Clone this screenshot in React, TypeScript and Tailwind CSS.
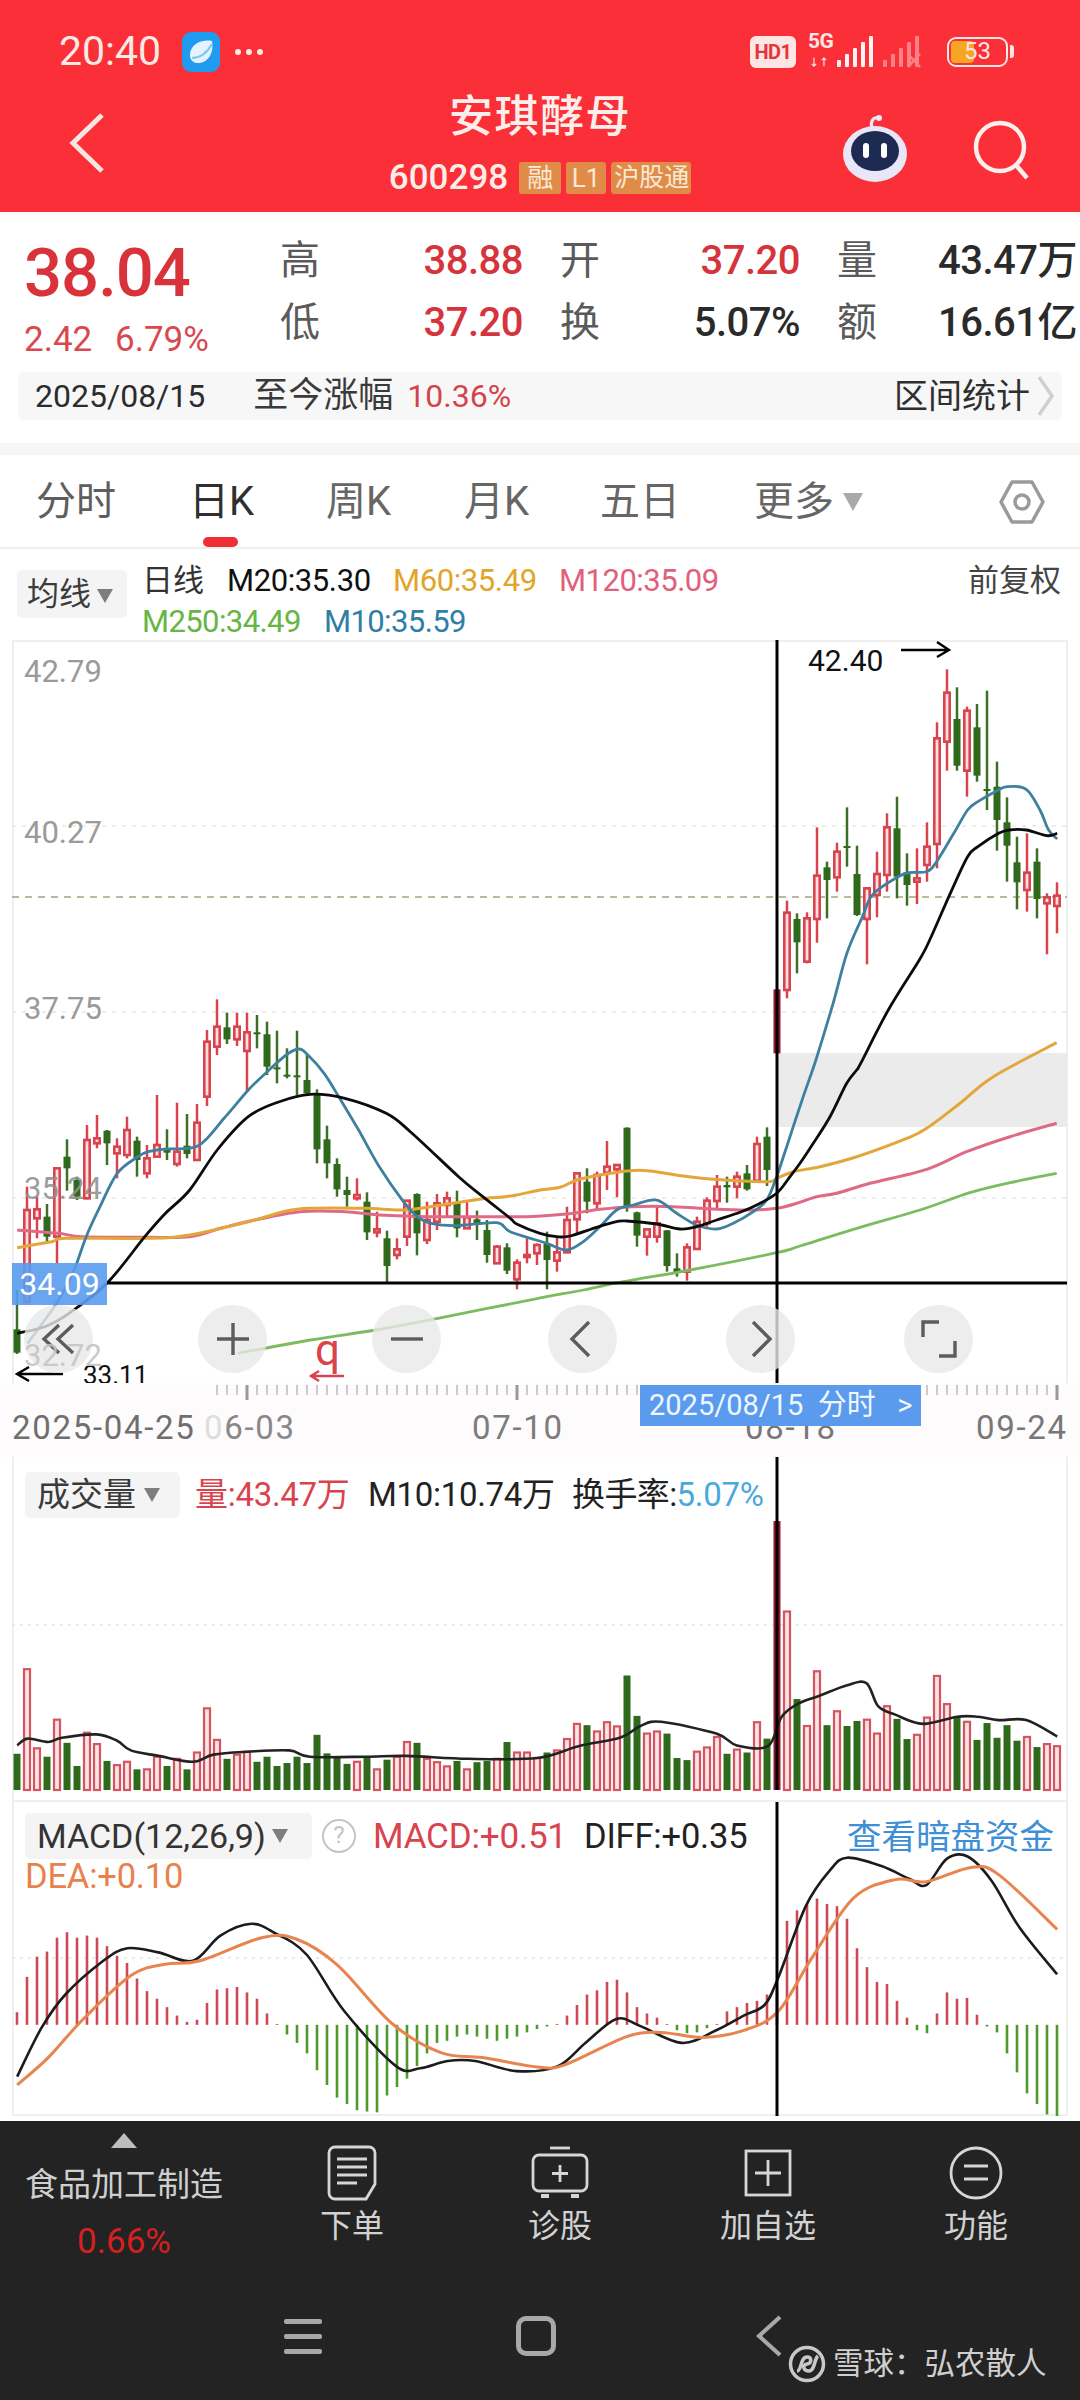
import React from "react";

type P = [number, number];
const zA = (p: P[]): P[] => p.map(([x, y]) => [x / 2.9, 980 + y / 3]);
const z7 = (p: P[]): P[] => p.map(([x, y]) => [500 + x / 3, 1090 + y / 3]);
const z9 = (p: P[]): P[] => p.map(([x, y]) => [760 + x / 3, 1040 + y / 3]);
const z4 = (p: P[]): P[] => p.map(([x, y]) => [540 + x / 2.9, 620 + y / 3]);
const z5 = (p: P[]): P[] => p.map(([x, y]) => [x / 1.452, 1460 + y / 2.376]);

function smooth(pts: P[]): string {
  let d = `M${pts[0][0].toFixed(1)} ${pts[0][1].toFixed(1)}`;
  for (let i = 0; i < pts.length - 1; i++) {
    const a = pts[Math.max(0, i - 1)];
    const b = pts[i];
    const c = pts[i + 1];
    const e = pts[Math.min(pts.length - 1, i + 2)];
    const c1x = b[0] + (c[0] - a[0]) / 6;
    const c1y = b[1] + (c[1] - a[1]) / 6;
    const c2x = c[0] - (e[0] - b[0]) / 6;
    const c2y = c[1] - (e[1] - b[1]) / 6;
    d += `C${c1x.toFixed(1)} ${c1y.toFixed(1)} ${c2x.toFixed(1)} ${c2y.toFixed(1)} ${c[0].toFixed(1)} ${c[1].toFixed(1)}`;
  }
  return d;
}

type C = [number, number, number, number, string];
const groupA: C[] = [
  [930, 1048, 1118, 1122, "g"], [620, 690, 965, 975, "r"], [650, 688, 715, 775, "r"], [672, 710, 770, 785, "g"], [563, 565, 770, 850, "r"],
  [478, 530, 565, 632, "g"], [590, 600, 650, 660, "g"], [435, 480, 655, 658, "r"], [405, 475, 490, 505, "r"], [450, 452, 490, 555, "g"],
  [475, 500, 520, 595, "r"], [410, 450, 525, 535, "r"], [470, 482, 540, 590, "g"], [495, 535, 580, 595, "r"], [345, 495, 530, 532, "r"],
  [448, 505, 518, 540, "g"], [368, 515, 552, 560, "r"], [402, 497, 522, 535, "g"], [372, 428, 540, 542, "r"], [150, 185, 350, 378, "r"],
  [58, 140, 200, 225, "r"], [98, 142, 178, 192, "g"], [98, 140, 178, 198, "r"], [98, 157, 213, 335, "r"], [105, 157, 162, 205, "g"],
  [125, 163, 260, 285, "g"], [152, 262, 267, 310, "g"], [205, 284, 290, 295, "g"], [152, 286, 290, 345, "g"], [225, 300, 340, 342, "g"],
  [328, 342, 508, 550, "g"], [437, 478, 550, 595, "g"], [535, 552, 628, 650, "g"], [590, 630, 645, 680, "g"], [595, 645, 655, 662, "r"],
  [637, 665, 757, 780, "g"], [695, 748, 757, 772, "r"], [752, 775, 858, 910, "g"], [775, 808, 825, 838, "r"], [660, 662, 770, 798, "r"],
  [640, 642, 760, 826, "g"], [665, 720, 780, 792, "r"], [642, 670, 725, 750, "r"], [635, 655, 675, 710, "r"], [632, 668, 745, 772, "g"],
  [665, 712, 745, 747, "r"], [692, 718, 735, 780, "g"], [720, 750, 825, 848, "g"], [795, 800, 850, 852, "r"], [790, 802, 872, 882, "g"],
  [838, 848, 898, 928, "r"], [770, 825, 830, 850, "r"], [790, 795, 820, 855, "r"],
];
const groupB: C[] = [
  [425, 462, 510, 598, "g"], [440, 487, 512, 545, "r"], [350, 390, 487, 490, "r"], [248, 250, 388, 430, "r"], [235, 275, 335, 370, "g"],
  [245, 255, 340, 360, "r"], [153, 230, 248, 300, "r"], [222, 225, 238, 322, "r"], [112, 113, 350, 365, "g"], [365, 367, 437, 470, "g"],
  [415, 418, 440, 497, "r"], [350, 400, 440, 458, "r"], [420, 421, 528, 545, "g"], [490, 535, 547, 560, "g"], [460, 472, 545, 572, "r"],
  [380, 395, 477, 480, "r"], [322, 332, 400, 410, "r"], [255, 290, 333, 355, "r"], [260, 285, 292, 338, "g"], [245, 260, 290, 325, "r"],
  [225, 250, 298, 302, "g"], [140, 162, 272, 274, "r"], [112, 140, 240, 288, "g"],
];
const groupC: C[] = [
  [1108, 1108, 1300, 1300, "d"], [842, 878, 1110, 1135, "r"], [880, 897, 967, 1060, "g"], [877, 895, 1025, 1030, "r"], [622, 767, 897, 968, "r"],
  [725, 742, 780, 895, "g"], [668, 695, 772, 815, "r"], [562, 678, 684, 740, "g"], [677, 762, 885, 888, "g"], [802, 805, 897, 1033, "r"],
  [695, 762, 825, 892, "r"], [580, 622, 765, 815, "r"], [530, 625, 770, 835, "g"], [700, 757, 795, 857, "g"], [685, 775, 785, 852, "r"],
  [607, 680, 735, 785, "r"], [307, 355, 672, 745, "r"], [148, 218, 365, 452, "r"], [202, 297, 437, 452, "g"], [260, 272, 452, 530, "r"],
  [252, 322, 467, 485, "g"], [212, 507, 513, 570, "g"], [425, 500, 600, 692, "g"], [532, 607, 677, 785, "g"], [650, 727, 787, 868, "g"],
  [640, 758, 810, 875, "r"], [685, 725, 837, 895, "g"], [820, 832, 850, 1003, "r"], [787, 827, 858, 940, "r"],
];
const candles = [
  ...groupA.map((c) => [980 + c[0] / 3, 980 + c[1] / 3, 980 + c[2] / 3, 980 + c[3] / 3, c[4]] as const),
  ...groupB.map((c) => [1090 + c[0] / 3, 1090 + c[1] / 3, 1090 + c[2] / 3, 1090 + c[3] / 3, c[4]] as const),
  ...groupC.map((c) => [620 + c[0] / 3, 620 + c[1] / 3, 620 + c[2] / 3, 620 + c[3] / 3, c[4]] as const),
];

const blue: P[] = [
  ...zA([[80, 1090], [130, 1020], [170, 960], [215, 870], [250, 770], [290, 680], [340, 580], [400, 530], [430, 515], [480, 507], [575, 497], [650, 415], [720, 330], [775, 275], [830, 225], [865, 207], [890, 222], [940, 280], [985, 355], [1040, 450], [1100, 560], [1170, 665], [1210, 710], [1250, 730], [1320, 737], [1440, 728], [1480, 755]]),
  ...z7([[140, 460], [200, 480], [250, 455], [300, 410], [350, 360], [400, 345], [470, 330], [530, 370], [590, 405], [650, 417], [700, 400], [760, 365], [800, 330], [830, 260], [860, 170]]),
  ...z4([[760, 1440], [800, 1320], [850, 1150], [890, 1000], [935, 890], [960, 830], [1000, 795], [1060, 760], [1120, 755], [1150, 725], [1200, 640], [1240, 570], [1270, 545], [1320, 515], [1355, 500], [1410, 508], [1450, 570], [1475, 630], [1500, 657]]),
];
const black: P[] = [
  ...zA([[50, 1060], [130, 1040], [200, 1000], [310, 910], [420, 770], [480, 700], [550, 630], [630, 510], [720, 410], [810, 365], [900, 343], [1000, 355], [1120, 400], [1190, 455], [1330, 590], [1400, 650], [1480, 715]]),
  ...z7([[50, 402], [120, 430], [170, 440], [210, 438], [290, 412], [350, 395], [380, 393], [470, 402], [540, 417], [590, 410], [650, 390], [720, 367], [770, 345], [830, 310], [870, 260], [900, 220]]),
  ...z9([[160, 310], [210, 230], [260, 130], [290, 90]]),
  ...z4([[930, 1330], [1010, 1170], [1100, 1020], [1130, 960], [1190, 820], [1240, 710], [1270, 680], [1330, 640], [1360, 630], [1410, 630], [1470, 647], [1500, 640]]),
];
const yellow: P[] = [
  ...zA([[50, 803], [150, 785], [190, 775], [430, 775], [550, 765], [720, 725], [830, 693], [900, 685], [1060, 685], [1170, 690], [1280, 675], [1410, 655]]),
  ...z7([[0, 322], [50, 315], [120, 300], [180, 292], [230, 270], [300, 255], [390, 242], [450, 243], [550, 258], [640, 268], [800, 275]]),
  ...z9([[50, 415], [100, 395], [180, 380], [290, 350], [440, 295], [500, 265], [600, 190], [700, 110], [890, 8]]),
];
const pink: P[] = [
  ...zA([[50, 750], [170, 760], [240, 770], [430, 772], [550, 770], [640, 745], [730, 722], [870, 695], [1000, 695], [1100, 705], [1250, 710]]),
  ...z7([[0, 380], [80, 380], [200, 372], [300, 358], [400, 350], [520, 350], [650, 358], [760, 360]]),
  ...z9([[50, 505], [110, 490], [170, 470], [230, 460], [330, 430], [500, 388], [620, 335], [750, 290], [890, 250]]),
];
const green: P[] = [
  ...zA([[690, 1120], [900, 1080], [1090, 1050], [1270, 1015]]),
  ...z7([[100, 628], [250, 600], [370, 575], [570, 540], [830, 488]]),
  ...z9([[120, 618], [290, 565], [480, 510], [630, 458], [750, 428], [890, 400]]),
];

const volRaw = "g698 r497 r685 g705 r617 g672 g727 r648 r675 g715 r725 r717 g735 r735 r705 g727 r710 g735 r695 r590 r665 g710 r700 r693 g717 g705 g727 g720 g705 g720 g653 g697 g708 g722 r717 g708 r735 g712 r705 r670 g672 r710 r718 r728 g715 r735 g718 g715 r710 g670 r695 r695 r708 g695 r690 r663 r627 g630 r645 r623 r633 g512 g608 r650 r645 g650 g708 g713 r693 r683 r658 g698 r688 g695 r623 g662 d145 r360 g568 r632 r502 g630 r597 g632 g620 r617 r650 r585 g615 g663 r653 r612 r513 r580 g608 r622 g665 g625 g660 g630 g667 r658 g682 r675 r680"
  .split(" ")
  .map((s) => ({ c: s[0], y: 1460 + Number(s.slice(1)) / 2.376 }));

const volLine = z5([[25, 678], [40, 662], [70, 670], [90, 660], [140, 652], [170, 667], [190, 690], [230, 703], [280, 717], [310, 700], [360, 693], [420, 690], [450, 705], [530, 705], [590, 703], [680, 710], [780, 708], [840, 680], [900, 660], [930, 632], [960, 622], [1040, 650], [1070, 678], [1115, 680], [1135, 610], [1160, 578], [1190, 560], [1230, 535], [1258, 530], [1275, 585], [1300, 605], [1340, 627], [1390, 610], [1420, 610], [1450, 618], [1490, 618], [1535, 657]]);

const macdTops = [1312, 1228, 1180, 1168, 1135, 1122, 1135, 1130, 1135, 1155, 1178, 1195, 1232, 1262, 1280, 1300, 1320, 1335, 1330, 1290, 1258, 1255, 1252, 1265, 1280, 1315, 1340, 1365, 1385, 1410, 1450, 1485, 1515, 1530, 1545, 1548, 1550, 1510, 1490, 1470, 1440, 1410, 1385, 1380, 1370, 1365, 1370, 1375, 1380, 1375, 1370, 1360, 1352, 1346, 1340, 1320, 1295, 1270, 1260, 1240, 1235, 1265, 1300, 1315, 1325, 1340, 1355, 1362, 1360, 1350, 1340, 1310, 1300, 1290, 1285, 1270, 1260, 1095, 1070, 1055, 1042, 1055, 1060, 1090, 1160, 1205, 1240, 1245, 1285, 1325, 1355, 1362, 1315, 1265, 1280, 1278, 1318, 1346, 1360, 1410, 1455, 1505, 1530, 1555, 1560];

const diff = z5([[25, 1465], [60, 1350], [95, 1270], [150, 1190], [185, 1160], [230, 1170], [280, 1190], [320, 1130], [365, 1102], [400, 1125], [445, 1175], [500, 1310], [575, 1440], [610, 1445], [650, 1428], [690, 1428], [750, 1452], [810, 1440], [850, 1385], [895, 1328], [930, 1345], [990, 1385], [1040, 1355], [1080, 1320], [1110, 1295], [1130, 1230], [1170, 1060], [1205, 975], [1230, 945], [1280, 965], [1320, 995], [1345, 1010], [1375, 947], [1405, 942], [1440, 1000], [1480, 1110], [1535, 1222]]);
const dea = z5([[25, 1485], [70, 1420], [120, 1330], [190, 1225], [240, 1198], [290, 1190], [380, 1135], [430, 1138], [490, 1200], [570, 1340], [640, 1408], [700, 1420], [780, 1442], [820, 1437], [910, 1370], [960, 1360], [1020, 1372], [1080, 1355], [1130, 1310], [1180, 1180], [1240, 1040], [1300, 997], [1345, 1002], [1410, 968], [1450, 985], [1535, 1115]]);

const cx = (i: number) => 17 + i * 10;

function PriceChart() {
  return (
    <svg className="absolute inset-0" width={1055} height={743} viewBox="12 640 1055 743">
      <rect x={777} y={1053} width={290} height={74} fill="#ecebec" />
      {[826, 1012, 1198].map((y) => (
        <line key={y} x1={12} x2={1067} y1={y} y2={y} stroke="#e8e8e8" strokeWidth={1.5} strokeDasharray="4 6" />
      ))}
      <line x1={12} x2={1067} y1={897} y2={897} stroke="#a8a17f" strokeWidth={1.5} strokeDasharray="7 6" />
      {candles.map((c, i) => {
        const x = cx(i);
        if (c[4] === "g")
          return (
            <g key={i}>
              <line x1={x} x2={x} y1={c[0]} y2={c[3]} stroke="#3d6f24" strokeWidth={2.5} />
              <rect x={x - 3.5} y={c[1]} width={7} height={Math.max(2, c[2] - c[1])} fill="#2f6a1c" />
            </g>
          );
        if (c[4] === "d") return <rect key={i} x={x - 3.5} y={c[1]} width={7} height={c[2] - c[1]} fill="#8f1b2c" />;
        return (
          <g key={i}>
            <line x1={x} x2={x} y1={c[0]} y2={c[3]} stroke="#d9434e" strokeWidth={2.5} />
            <rect x={x - 2.7} y={c[1]} width={5.4} height={Math.max(2, c[2] - c[1])} fill="#f8dede" stroke="#d9434e" strokeWidth={2.6} />
          </g>
        );
      })}
      <path d={smooth(green)} fill="none" stroke="#7dbb5f" strokeWidth={2.8} />
      <path d={smooth(pink)} fill="none" stroke="#df6a85" strokeWidth={3} />
      <path d={smooth(yellow)} fill="none" stroke="#e2a63a" strokeWidth={3} />
      <path d={smooth(blue)} fill="none" stroke="#3f7f9f" strokeWidth={2.8} />
      <path d={smooth(black)} fill="none" stroke="#0c0c0c" strokeWidth={2.8} />
      <line x1={107} x2={1067} y1={1283} y2={1283} stroke="#000" strokeWidth={3} />
      <line x1={777} x2={777} y1={640} y2={1383} stroke="#000" strokeWidth={3} />
      <path d="M901 650H948M937 642L949 650L937 657" fill="none" stroke="#000" strokeWidth={2.4} />
      <path d="M63 1374H17M29 1367L17 1374L29 1381" fill="none" stroke="#000" strokeWidth={2.4} />
      <path d="M311 1376H344M319 1371L311 1376L319 1381" fill="none" stroke="#d9434e" strokeWidth={2.4} />
    </svg>
  );
}

function CircleBtn({ left, children }: { left: string; children: React.ReactNode }) {
  return (
    <div className={`absolute top-[665px] w-[69px] h-[68px] rounded-full bg-[#e8e8e8]/80 flex items-center justify-center ${left}`}>
      <svg width={44} height={44} viewBox="0 0 44 44" fill="none" stroke="#5c5c5c" strokeWidth={3.4}>
        {children}
      </svg>
    </div>
  );
}

function VolumeChart() {
  return (
    <svg className="absolute inset-0" width={1055} height={345} viewBox="12 1457 1055 345">
      <line x1={12} x2={1067} y1={1625} y2={1625} stroke="#e4e4e4" strokeWidth={1.5} strokeDasharray="3 5" />
      {volRaw.map((b, i) => {
        const x = cx(i);
        if (b.c === "r")
          return <rect key={i} x={x - 3} y={b.y} width={6} height={1790 - b.y} fill="#f7e4e4" stroke="#d6545f" strokeWidth={2.2} />;
        return <rect key={i} x={x - 3.5} y={b.y} width={7} height={1790 - b.y} fill={b.c === "g" ? "#2f6a1c" : "#8f1b2c"} />;
      })}
      <path d={smooth(volLine)} fill="none" stroke="#222" strokeWidth={2.6} />
      <line x1={777} x2={777} y1={1457} y2={1790} stroke="#000" strokeWidth={3} />
    </svg>
  );
}

function MacdChart() {
  const zero = 1460 + 1342 / 2.376;
  return (
    <svg className="absolute inset-0" width={1055} height={314} viewBox="12 1802 1055 314">
      <line x1={12} x2={1067} y1={1958} y2={1958} stroke="#e4e4e4" strokeWidth={1.5} strokeDasharray="3 5" />
      {macdTops.map((t, i) => {
        const y = 1460 + t / 2.376;
        const x = cx(i);
        return <line key={i} x1={x} x2={x} y1={y} y2={zero} stroke={t < 1342 ? "#cc4a55" : "#4f9a2e"} strokeWidth={2.6} />;
      })}
      <path d={smooth(diff)} fill="none" stroke="#1c1c1c" strokeWidth={2.6} />
      <path d={smooth(dea)} fill="none" stroke="#e8854f" strokeWidth={3} />
      <line x1={777} x2={777} y1={1802} y2={2116} stroke="#000" strokeWidth={3} />
    </svg>
  );
}

function Stat({ label, value, red }: { label: string; value: string; red?: boolean }) {
  return (
    <div className="flex items-center justify-between h-[62px]">
      <span className="text-[40px] leading-none text-[#5a5a5a]">{label}</span>
      <span className={`text-[40px] leading-none font-medium tracking-[-0.5px] ${red ? "text-[#d5343c]" : "text-[#2a2a2a]"}`}>{value}</span>
    </div>
  );
}

function Tri({ className }: { className: string }) {
  return <span className={`inline-block border-l-[8px] border-r-[8px] border-t-[14px] border-l-transparent border-r-transparent border-t-[#7d7d7d] ${className}`} />;
}

function Signal({ className, cross }: { className: string; cross?: boolean }) {
  return (
    <svg width={cross ? 44 : 38} height={32} viewBox={cross ? "0 0 44 32" : "0 0 38 32"} className={className}>
      <rect x={1} y={24} width={4} height={7} rx={1} fill="#fff" />
      <rect x={9} y={18} width={4} height={13} rx={1} fill="#fff" />
      <rect x={17} y={12} width={4} height={19} rx={1} fill="#fff" />
      <rect x={25} y={6} width={4} height={25} rx={1} fill="#fff" />
      <rect x={33} y={0} width={4} height={31} rx={1} fill="#fff" />
      {cross && <path d="M26 18L38 31M38 18L26 31" stroke="#fff" strokeWidth={2.5} />}
    </svg>
  );
}

function FooterItem({ icon, label }: { icon: React.ReactNode; label: string }) {
  return (
    <div className="flex flex-col items-center">
      <div className="h-[60px] flex items-center justify-center mt-[22px]">{icon}</div>
      <span className="mt-[4px] text-[32px] leading-[38px] text-[#d2d2d2]">{label}</span>
    </div>
  );
}

export default function App() {
  return (
    <div className="w-[1080px] h-[2400px] flex flex-col bg-white overflow-hidden font-[Roboto,'Noto_Sans_CJK_SC',sans-serif]">
      {/* Header */}
      <header className="relative h-[212px] bg-[#fb2f38] text-white shrink-0">
        <div className="h-[104px] flex items-center pl-[59px] pr-[66px] pb-[1px]">
          <span className="text-[41px] leading-none text-[#fbe9e4]">20:40</span>
          <svg width={38} height={40} viewBox="0 0 38 40" className="ml-[21px]">
            <rect width={38} height={40} rx={9} fill="#1f9bf0" />
            <path d="M8 23C8 12 20 7 30 9C32 20 27 32 14 31C10 30 8 27 8 23Z" fill="#e4f3ff" />
            <path d="M10 26C18 26 25 21 30 12" stroke="#7cc5f6" strokeWidth={2} fill="none" />
          </svg>
          <span className="ml-[15px] flex gap-[5px]">
            <span className="w-[6px] h-[6px] rounded-full bg-[#fbe9e4]" />
            <span className="w-[6px] h-[6px] rounded-full bg-[#fbe9e4]" />
            <span className="w-[6px] h-[6px] rounded-full bg-[#fbe9e4]" />
          </span>
          <div className="ml-auto flex items-center">
            <span className="w-[46px] h-[32px] rounded-[6px] bg-[#fde6e4] text-[#e8333a] text-[20px] leading-[32px] font-bold text-center tracking-[-0.5px]">HD1</span>
            <div className="relative ml-[12px] w-[28px] h-[33px]">
              <span className="absolute left-0 top-[-5px] text-[21px] leading-[22px] font-bold text-[#fde6e4] tracking-[-0.5px]">5G</span>
              <span className="absolute left-[1px] bottom-[0px] text-[10px] leading-[10px] font-bold text-[#fde6e4]">↓↑</span>
            </div>
            <Signal className="opacity-95" />
            <Signal cross className="ml-[8px] opacity-40" />
            <div className="ml-[21px] relative w-[61px] h-[30px] rounded-[9px] border-[2.5px] border-[#fde6e4] overflow-hidden">
              <div className="absolute left-[2px] top-[2px] bottom-[2px] w-[23px] rounded-[4px] bg-[#f5a623]" />
              <span className="absolute inset-0 text-center text-[24px] leading-[25px] text-[#fde6e4]">53</span>
            </div>
            <span className="ml-[2px] w-[4px] h-[13px] rounded-r-[3px] bg-[#fde6e4]" />
          </div>
        </div>
        <div className="absolute left-[69px] top-[112px]">
          <svg width={36} height={62} viewBox="0 0 36 62" fill="none" stroke="#f8e4e0" strokeWidth={5}>
            <path d="M33 3L4 31L33 59" />
          </svg>
        </div>
        <div className="absolute left-0 right-0 top-[91px] flex flex-col items-center">
          <span className="text-[44px] leading-[52px] font-medium tracking-[1.5px] text-[#fcefeb]">安琪酵母</span>
          <div className="mt-[17px] flex items-center">
            <span className="text-[35px] leading-[36px] font-medium text-[#fbeee9]">600298</span>
            <span className="ml-[11px] w-[42px] h-[32px] rounded-[3px] bg-[#e08c48] text-[26px] leading-[32px] text-center text-[#fae8d6]">融</span>
            <span className="ml-[5px] w-[40px] h-[32px] rounded-[3px] bg-[#e08c48] text-[26px] leading-[32px] text-center text-[#fae8d6]">L1</span>
            <span className="ml-[5px] w-[80px] h-[32px] rounded-[3px] bg-[#e08c48] text-[25px] leading-[32px] text-[#fae8d6] overflow-hidden whitespace-nowrap pl-[3px]">沪股通</span>
          </div>
        </div>
        <svg className="absolute left-[842px] top-[114px]" width={66} height={68} viewBox="0 0 66 68">
          <path d="M30 14C28 8 31 3 36 4" fill="none" stroke="#efe9fb" strokeWidth={3} />
          <circle cx={37} cy={4} r={3} fill="#efe9fb" />
          <ellipse cx={33} cy={40} rx={32} ry={28} fill="#e9e6f8" />
          <ellipse cx={33} cy={37} rx={24} ry={20} fill="#1d2b52" />
          <rect x={21} y={29} width={6} height={15} rx={3} fill="#fff" />
          <rect x={39} y={29} width={6} height={15} rx={3} fill="#fff" />
        </svg>
        <svg className="absolute left-[972px] top-[117px]" width={60} height={64} viewBox="0 0 60 64" fill="none" stroke="#fcefeb" strokeWidth={4.5}>
          <circle cx={28} cy={30} r={24} />
          <path d="M44 48L55 61" />
        </svg>
      </header>

      {/* Quote */}
      <section className="h-[231px] shrink-0 bg-gradient-to-b from-[#f8f8f8] to-white to-[10px] flex flex-col">
        <div className="flex h-[160px]">
          <div className="w-[280px] pl-[24px] pt-[25px] shrink-0">
            <div className="text-[67px] leading-[72px] font-medium text-[#d8333b] tracking-[-1px]">38.04</div>
            <div className="mt-[12px] flex text-[35px] leading-[38px] text-[#d9484e]">
              <span className="w-[91px]">2.42</span>
              <span>6.79%</span>
            </div>
          </div>
          <div className="grid grid-cols-[243px_240px_240px] gap-x-[37px] pt-[18px] content-start">
            <Stat label="高" value="38.88" red />
            <Stat label="开" value="37.20" red />
            <Stat label="量" value="43.47万" />
            <Stat label="低" value="37.20" red />
            <Stat label="换" value="5.07%" />
            <Stat label="额" value="16.61亿" />
          </div>
        </div>
        <div className="ml-[18px] mr-[18px] h-[48px] rounded-[6px] bg-[#f7f7f7] flex items-center pl-[17px] pr-[6px]">
          <span className="text-[32px] text-[#2c2c2c]">2025/08/15</span>
          <span className="ml-[48px] text-[35px] text-[#3a3a3a]">至今涨幅</span>
          <span className="ml-[14px] text-[32px] text-[#d5434a]">10.36%</span>
          <span className="ml-auto text-[34px] text-[#2f2f2f]">区间统计</span>
          <svg width={20} height={44} viewBox="0 0 20 44" fill="none" stroke="#cfcfcf" strokeWidth={3.5} className="ml-[6px]">
            <path d="M3 3L16 22L3 41" />
          </svg>
        </div>
      </section>

      <div className="h-[12px] bg-[#f6f6f6] shrink-0" />

      {/* Tabs */}
      <nav className="relative h-[94px] shrink-0 border-b-2 border-[#efefef]">
        {[
          ["分时", "left-[36px]", "#5e5e5e"],
          ["日K", "left-[189px]", "#2f2f2f"],
          ["周K", "left-[326px]", "#666"],
          ["月K", "left-[464px]", "#666"],
          ["五日", "left-[600px]", "#666"],
          ["更多", "left-[754px]", "#666"],
        ].map(([t, l, c]) => (
          <span key={t} className={`absolute top-[23px] text-[40px] leading-[48px] ${l}`} style={{ color: c }}>
            {t}
          </span>
        ))}
        <span className="absolute left-[843px] top-[38px] border-l-[10px] border-r-[10px] border-t-[18px] border-l-transparent border-r-transparent border-t-[#a9a9a9]" />
        <svg className="absolute left-[999px] top-[24px]" width={46} height={46} viewBox="0 0 46 46" fill="none" stroke="#9a9a9a">
          <path d="M13 3H33L44 23L33 43H13L2 23Z" strokeWidth={3.5} strokeLinejoin="round" />
          <circle cx={23} cy={23} r={7} strokeWidth={3.5} />
        </svg>
        <span className="absolute left-[203px] top-[82px] w-[35px] h-[10px] rounded-[5px] bg-[#ee2f36]" />
      </nav>

      {/* Indicators */}
      <div className="h-[91px] shrink-0 flex pl-[17px] pr-[19px] pt-[11px]">
        <div className="w-[110px] h-[48px] mt-[10px] rounded-[5px] bg-[#f5f4f4] flex items-center pl-[10px] gap-[6px]">
          <span className="text-[32px] leading-none text-[#3c3c3c]">均线</span>
          <Tri className="mt-[3px]" />
        </div>
        <div className="ml-[15px] flex flex-col text-[31px] leading-[41px]">
          <div className="flex">
            <span className="text-[#333] w-[85px]">日线</span>
            <span className="text-[#111] w-[166px] tracking-[-0.4px]">M20:35.30</span>
            <span className="text-[#e2a52a] w-[166px] tracking-[-0.4px]">M60:35.49</span>
            <span className="text-[#e0617c] tracking-[-0.5px]">M120:35.09</span>
          </div>
          <div className="flex">
            <span className="text-[#66b545] w-[182px] tracking-[-0.6px]">M250:34.49</span>
            <span className="text-[#2f7ea6] tracking-[-0.6px]">M10:35.59</span>
          </div>
        </div>
        <span className="ml-auto text-[31px] leading-[41px] text-[#444]">前复权</span>
      </div>

      {/* Price chart */}
      <div className="relative mx-[12px] h-[743px] shrink-0 border-x-2 border-t-2 border-[#efefef] box-border">
        <div className="absolute left-[-2px] top-[-2px] w-[1055px] h-[743px]">
          <PriceChart />
          <span className="absolute left-[12px] top-[16px] text-[31px] leading-[32px] text-[#9a9a9a]">42.79</span>
          <span className="absolute left-[12px] top-[177px] text-[31px] leading-[32px] text-[#9a9a9a]">40.27</span>
          <span className="absolute left-[12px] top-[353px] text-[31px] leading-[32px] text-[#9a9a9a]">37.75</span>
          <span className="absolute left-[12px] top-[533px] text-[31px] leading-[32px] text-[#8f8f8f]/90">35.24</span>
          <span className="absolute left-[796px] top-[4px] text-[30px] leading-[34px] text-[#111]">42.40</span>
          <span className="absolute left-[71px] top-[720px] text-[26px] leading-[30px] text-[#111]">33.11</span>
          <span className="absolute left-0 top-[623px] w-[95px] h-[42px] bg-[#5a9bee]/90 text-white text-[32px] leading-[42px] text-center">34.09</span>
          <CircleBtn left="left-[12px]">
            <path d="M22 8L7 22L22 36M36 8L21 22L36 36" />
          </CircleBtn>
          <CircleBtn left="left-[186px]">
            <path d="M6 22H38M22 6V38" />
          </CircleBtn>
          <CircleBtn left="left-[360px]">
            <path d="M6 22H38" />
          </CircleBtn>
          <CircleBtn left="left-[536px]">
            <path d="M28 5L11 22L28 39" />
          </CircleBtn>
          <CircleBtn left="left-[714px]">
            <path d="M14 5L31 22L14 39" />
          </CircleBtn>
          <CircleBtn left="left-[892px]">
            <path d="M22 5H6V20M38 24V39H22" />
          </CircleBtn>
          <span className="absolute left-[12px] top-[700px] text-[31px] leading-[32px] text-[#c4c4c4]/90">32.72</span>
          <span className="absolute left-[303px] top-[690px] text-[44px] leading-[40px] text-[#d9434e]">q</span>
        </div>
      </div>

      {/* Axis */}
      <div className="relative h-[74px] shrink-0 bg-[#fdfbfb]">
        <svg className="absolute left-0 top-0" width={1080} height={20} viewBox="0 0 1080 20">
          {Array.from({ length: 85 }, (_, i) => 217 + i * 10).map((x) => (
            <line key={x} x1={x} x2={x} y1={2} y2={(x - 247) % 270 === 0 ? 17 : 12} stroke={(x - 247) % 270 === 0 ? "#999" : "#bbb"} strokeWidth={(x - 247) % 270 === 0 ? 3 : 1.5} />
          ))}
        </svg>
        <div className="absolute left-[12px] top-[25px] text-[33px] leading-[40px] tracking-[1.7px] text-[#6f6f6f]">2025-04-25</div>
        <div className="absolute left-[204px] top-[25px] text-[33px] leading-[40px] tracking-[1.7px] text-[#888]">
          <span className="text-[#ddd]">0</span>6-03
        </div>
        <div className="absolute left-[472px] top-[25px] text-[33px] leading-[40px] tracking-[1.7px] text-[#7c7c7c]">07-10</div>
        <div className="absolute left-[745px] top-[25px] text-[33px] leading-[40px] tracking-[1.7px] text-[#777]">08-18</div>
        <div className="absolute left-[976px] top-[25px] text-[33px] leading-[40px] tracking-[1.7px] text-[#777]">09-24</div>
        <div className="absolute left-[640px] top-[2px] w-[281px] h-[41px] bg-[#5a9bee] text-[#f0f7ff] text-[29px] leading-[41px] flex items-center whitespace-pre pl-[9px]">
          2025/08/15  分时   &gt;
        </div>
      </div>

      {/* Volume */}
      <section className="relative mx-[12px] h-[345px] shrink-0 border-x-2 border-b-2 border-[#efefef] box-border">
        <div className="absolute left-[-2px] top-0 w-[1055px] h-[345px]">
          <VolumeChart />
          <div className="absolute left-[13px] top-[15px] flex items-center text-[33px] leading-[44px] whitespace-nowrap">
            <div className="w-[155px] h-[46px] rounded-[5px] bg-[#f5f4f4] flex items-center pl-[12px] gap-[8px]">
              <span className="text-[33px] text-[#3a3a3a]">成交量</span>
              <Tri className="" />
            </div>
            <span className="ml-[15px] text-[#d9434e] w-[173px] tracking-[-0.3px]">量:43.47万</span>
            <span className="text-[#222] w-[204px] tracking-[-0.3px]">M10:10.74万</span>
            <span className="text-[#222] tracking-[-0.6px]">换手率:</span>
            <span className="text-[#4aa8dc] tracking-[-0.3px]">5.07%</span>
          </div>
        </div>
      </section>

      {/* MACD */}
      <section className="relative mx-[12px] h-[314px] shrink-0 border-x-2 border-b-2 border-[#efefef] box-border">
        <div className="absolute left-[-2px] top-0 w-[1055px] h-[314px]">
          <MacdChart />
          <div className="absolute left-[13px] top-[11px] flex items-center whitespace-nowrap">
            <div className="w-[287px] h-[46px] rounded-[5px] bg-[#f5f4f4] flex items-center pl-[12px] gap-[6px]">
              <span className="text-[34px] leading-none text-[#333]">MACD(12,26,9)</span>
              <Tri className="" />
            </div>
            <span className="ml-[10px] w-[34px] h-[34px] rounded-full border-[2.5px] border-[#c4c4c4] text-[#c4c4c4] text-[24px] leading-[29px] text-center">?</span>
            <span className="ml-[17px] text-[35px] leading-none text-[#d9434e] w-[211px] tracking-[-0.2px]">MACD:+0.51</span>
            <span className="text-[34.5px] leading-none text-[#222] tracking-[-0.2px]">DIFF:+0.35</span>
          </div>
          <span className="absolute left-[835px] top-[15px] text-[34.5px] leading-[40px] text-[#3f8fd6] whitespace-nowrap">查看暗盘资金</span>
          <span className="absolute left-[13px] top-[56px] text-[34.5px] leading-[36px] text-[#e8824c] tracking-[-0.2px]">DEA:+0.10</span>
        </div>
      </section>

      <div className="h-[5px] shrink-0" />

      {/* Footer */}
      <footer className="relative flex-1 bg-[#232323] flex flex-col">
        <div className="grid grid-cols-[248px_208px_208px_208px_208px] h-[174px]">
          <div className="flex flex-col items-center pt-[12px]">
            <span className="border-l-[13px] border-r-[13px] border-b-[15px] border-l-transparent border-r-transparent border-b-[#bdbdbd]" />
            <span className="mt-[17px] text-[33px] leading-[40px] text-[#cfcfcf] whitespace-nowrap">食品加工制造</span>
            <span className="mt-[18px] text-[35px] leading-[38px] text-[#d32020]">0.66%</span>
          </div>
          <FooterItem
            label="下单"
            icon={
              <svg width={50} height={56} viewBox="0 0 50 56" fill="none" stroke="#d6d6d6" strokeWidth={2.8}>
                <path d="M8 2H42A6 6 0 0 1 48 8V39L39 54H8A6 6 0 0 1 2 48V8A6 6 0 0 1 8 2Z" />
                <path d="M10 14H40M10 22H40M10 30H40M10 38H30" />
              </svg>
            }
          />
          <FooterItem
            label="诊股"
            icon={
              <svg width={58} height={54} viewBox="0 0 58 54" fill="none" stroke="#d6d6d6" strokeWidth={2.8}>
                <path d="M19 2H39" />
                <rect x={2} y={9} width={54} height={36} rx={6} />
                <path d="M29 19V36M21 27.5H37" />
                <path d="M10 50H18M40 50H48" strokeWidth={4} />
              </svg>
            }
          />
          <FooterItem
            label="加自选"
            icon={
              <svg width={48} height={48} viewBox="0 0 48 48" fill="none" stroke="#d6d6d6" strokeWidth={2.8}>
                <rect x={2} y={2} width={44} height={44} />
                <path d="M24 11V37M11 24H37" />
              </svg>
            }
          />
          <FooterItem
            label="功能"
            icon={
              <svg width={54} height={54} viewBox="0 0 54 54" fill="none" stroke="#d6d6d6" strokeWidth={2.8}>
                <circle cx={27} cy={27} r={25} />
                <path d="M15 20H39M15 33H39" />
              </svg>
            }
          />
        </div>
        <div className="relative mt-[20px] h-[42px] flex items-center">
          <div className="ml-[284px] flex flex-col gap-[10px] w-[38px]">
            <span className="h-[5px] rounded-[2px] bg-[#a8a8a8]" />
            <span className="h-[5px] rounded-[2px] bg-[#a8a8a8]" />
            <span className="h-[5px] rounded-[2px] bg-[#a8a8a8]" />
          </div>
          <span className="ml-[194px] w-[40px] h-[40px] rounded-[10px] border-[5px] border-[#a8a8a8] box-border" />
          <svg className="ml-[200px]" width={26} height={42} viewBox="0 0 26 42" fill="none" stroke="#a8a8a8" strokeWidth={4}>
            <path d="M24 2L3 21L24 40" />
          </svg>
        </div>
        <div className="absolute left-[788px] top-[224px] flex items-center">
          <svg width={38} height={38} viewBox="0 0 38 38" fill="none" stroke="#c8c8c8" strokeWidth={3.5}>
            <circle cx={19} cy={19} r={16.5} />
            <path d="M9 26C14 26 12 12 19 12C24 12 24 18 19 19C14 20 15 26 21 26C27 26 26 14 30 11" />
          </svg>
          <span className="ml-[7px] text-[30.5px] leading-[36px] text-[#cfcfcf] whitespace-nowrap">雪球：弘农散人</span>
        </div>
      </footer>
    </div>
  );
}
